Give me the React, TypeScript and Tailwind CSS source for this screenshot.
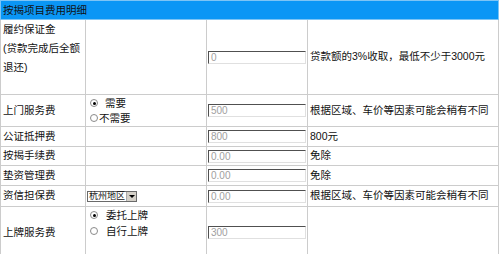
import React from 'react'

const font = { fontFamily: '"Liberation Sans", "Noto Sans CJK SC", sans-serif' }

function Box({ value }: { value: string }) {
  return (
    <div className="w-[98px] h-[13px] border-t border-l border-[#505050] border-b border-r border-b-[#e0e0e0] border-r-[#e0e0e0] bg-white text-[10px] leading-[11px] text-[#a0a0a0] pl-[2px] overflow-hidden">
      {value}
    </div>
  )
}

function Radio({ checked }: { checked?: boolean }) {
  return (
    <span className="inline-flex items-center justify-center w-[8px] h-[8px] rounded-full border border-[#8a8a8a] bg-white align-middle">
      {checked && <span className="w-[3px] h-[3px] rounded-full bg-black" />}
    </span>
  )
}

function Select() {
  return (
    <div className="inline-flex w-[50px] h-[11px] border border-[#6a6a6a] bg-white items-center">
      <span className="flex-1 text-[9px] leading-[10px] pl-[1px] whitespace-nowrap">杭州地区</span>
      <span className="w-[10px] h-[9px] bg-[#d4d0c8] border-l border-[#aaa] flex items-center justify-center">
        <span className="w-0 h-0 border-l-[3px] border-r-[3px] border-t-[3px] border-l-transparent border-r-transparent border-t-black" />
      </span>
    </div>
  )
}

const cell = 'border border-[#cccccc] p-0'

export default function App() {
  return (
    <div className="w-[499px] h-[254px] overflow-hidden bg-white text-[#111] text-[10.5px]" style={font}>
      <table className="w-[498px] table-fixed border-collapse">
        <colgroup>
          <col className="w-[85px]" />
          <col className="w-[121px]" />
          <col className="w-[101px]" />
          <col className="w-[191px]" />
        </colgroup>
        <tbody>
          <tr className="h-[19px]">
            <td colSpan={4} className="border border-[#7cc4f5] bg-[#0a96f5] pl-[2px] text-[#111] leading-[18px]">
              按揭项目费用明细
            </td>
          </tr>
          <tr className="h-[75px]">
            <td className={`${cell} align-top pl-[2px] leading-[19px]`}>
              履约保证金
              <br />
              (贷款完成后全额
              <br />
              退还)
            </td>
            <td className={cell} />
            <td className={`${cell} pl-px`}>
              <Box value="0" />
            </td>
            <td className={`${cell} pl-[2px]`}>贷款额的3%收取，最低不少于3000元</td>
          </tr>
          <tr className="h-[32px]">
            <td className={`${cell} pl-[2px]`}>上门服务费</td>
            <td className={`${cell} pl-[4px] leading-[15px]`}>
              <div className="flex items-center">
                <Radio checked />
                <span className="ml-[7px]">需要</span>
              </div>
              <div className="flex items-center">
                <Radio />
                <span className="ml-[1px]">不需要</span>
              </div>
            </td>
            <td className={`${cell} pl-px`}>
              <Box value="500" />
            </td>
            <td className={`${cell} pl-[2px]`}>根据区域、车价等因素可能会稍有不同</td>
          </tr>
          <tr className="h-[20px]">
            <td className={`${cell} pl-[2px]`}>公证抵押费</td>
            <td className={cell} />
            <td className={`${cell} pl-px`}>
              <Box value="800" />
            </td>
            <td className={`${cell} pl-[2px]`}>800元</td>
          </tr>
          <tr className="h-[19px]">
            <td className={`${cell} pl-[2px]`}>按揭手续费</td>
            <td className={cell} />
            <td className={`${cell} pl-px`}>
              <Box value="0.00" />
            </td>
            <td className={`${cell} pl-[2px]`}>免除</td>
          </tr>
          <tr className="h-[20px]">
            <td className={`${cell} pl-[2px]`}>垫资管理费</td>
            <td className={cell} />
            <td className={`${cell} pl-px`}>
              <Box value="0.00" />
            </td>
            <td className={`${cell} pl-[2px]`}>免除</td>
          </tr>
          <tr className="h-[21px]">
            <td className={`${cell} pl-[2px]`}>资信担保费</td>
            <td className={`${cell} pl-px`}>
              <Select />
            </td>
            <td className={`${cell} pl-px`}>
              <Box value="0.00" />
            </td>
            <td className={`${cell} pl-[2px]`}>根据区域、车价等因素可能会稍有不同</td>
          </tr>
          <tr className="h-[52px]">
            <td className={`${cell} pl-[2px]`}>上牌服务费</td>
            <td className={`${cell} align-top pl-[4px] leading-[16px]`}>
              <div className="flex items-center">
                <Radio checked />
                <span className="ml-[8px]">委托上牌</span>
              </div>
              <div className="flex items-center">
                <Radio />
                <span className="ml-[8px]">自行上牌</span>
              </div>
            </td>
            <td className={`${cell} pl-px`}>
              <Box value="300" />
            </td>
            <td className={cell} />
          </tr>
        </tbody>
      </table>
    </div>
  )
}
